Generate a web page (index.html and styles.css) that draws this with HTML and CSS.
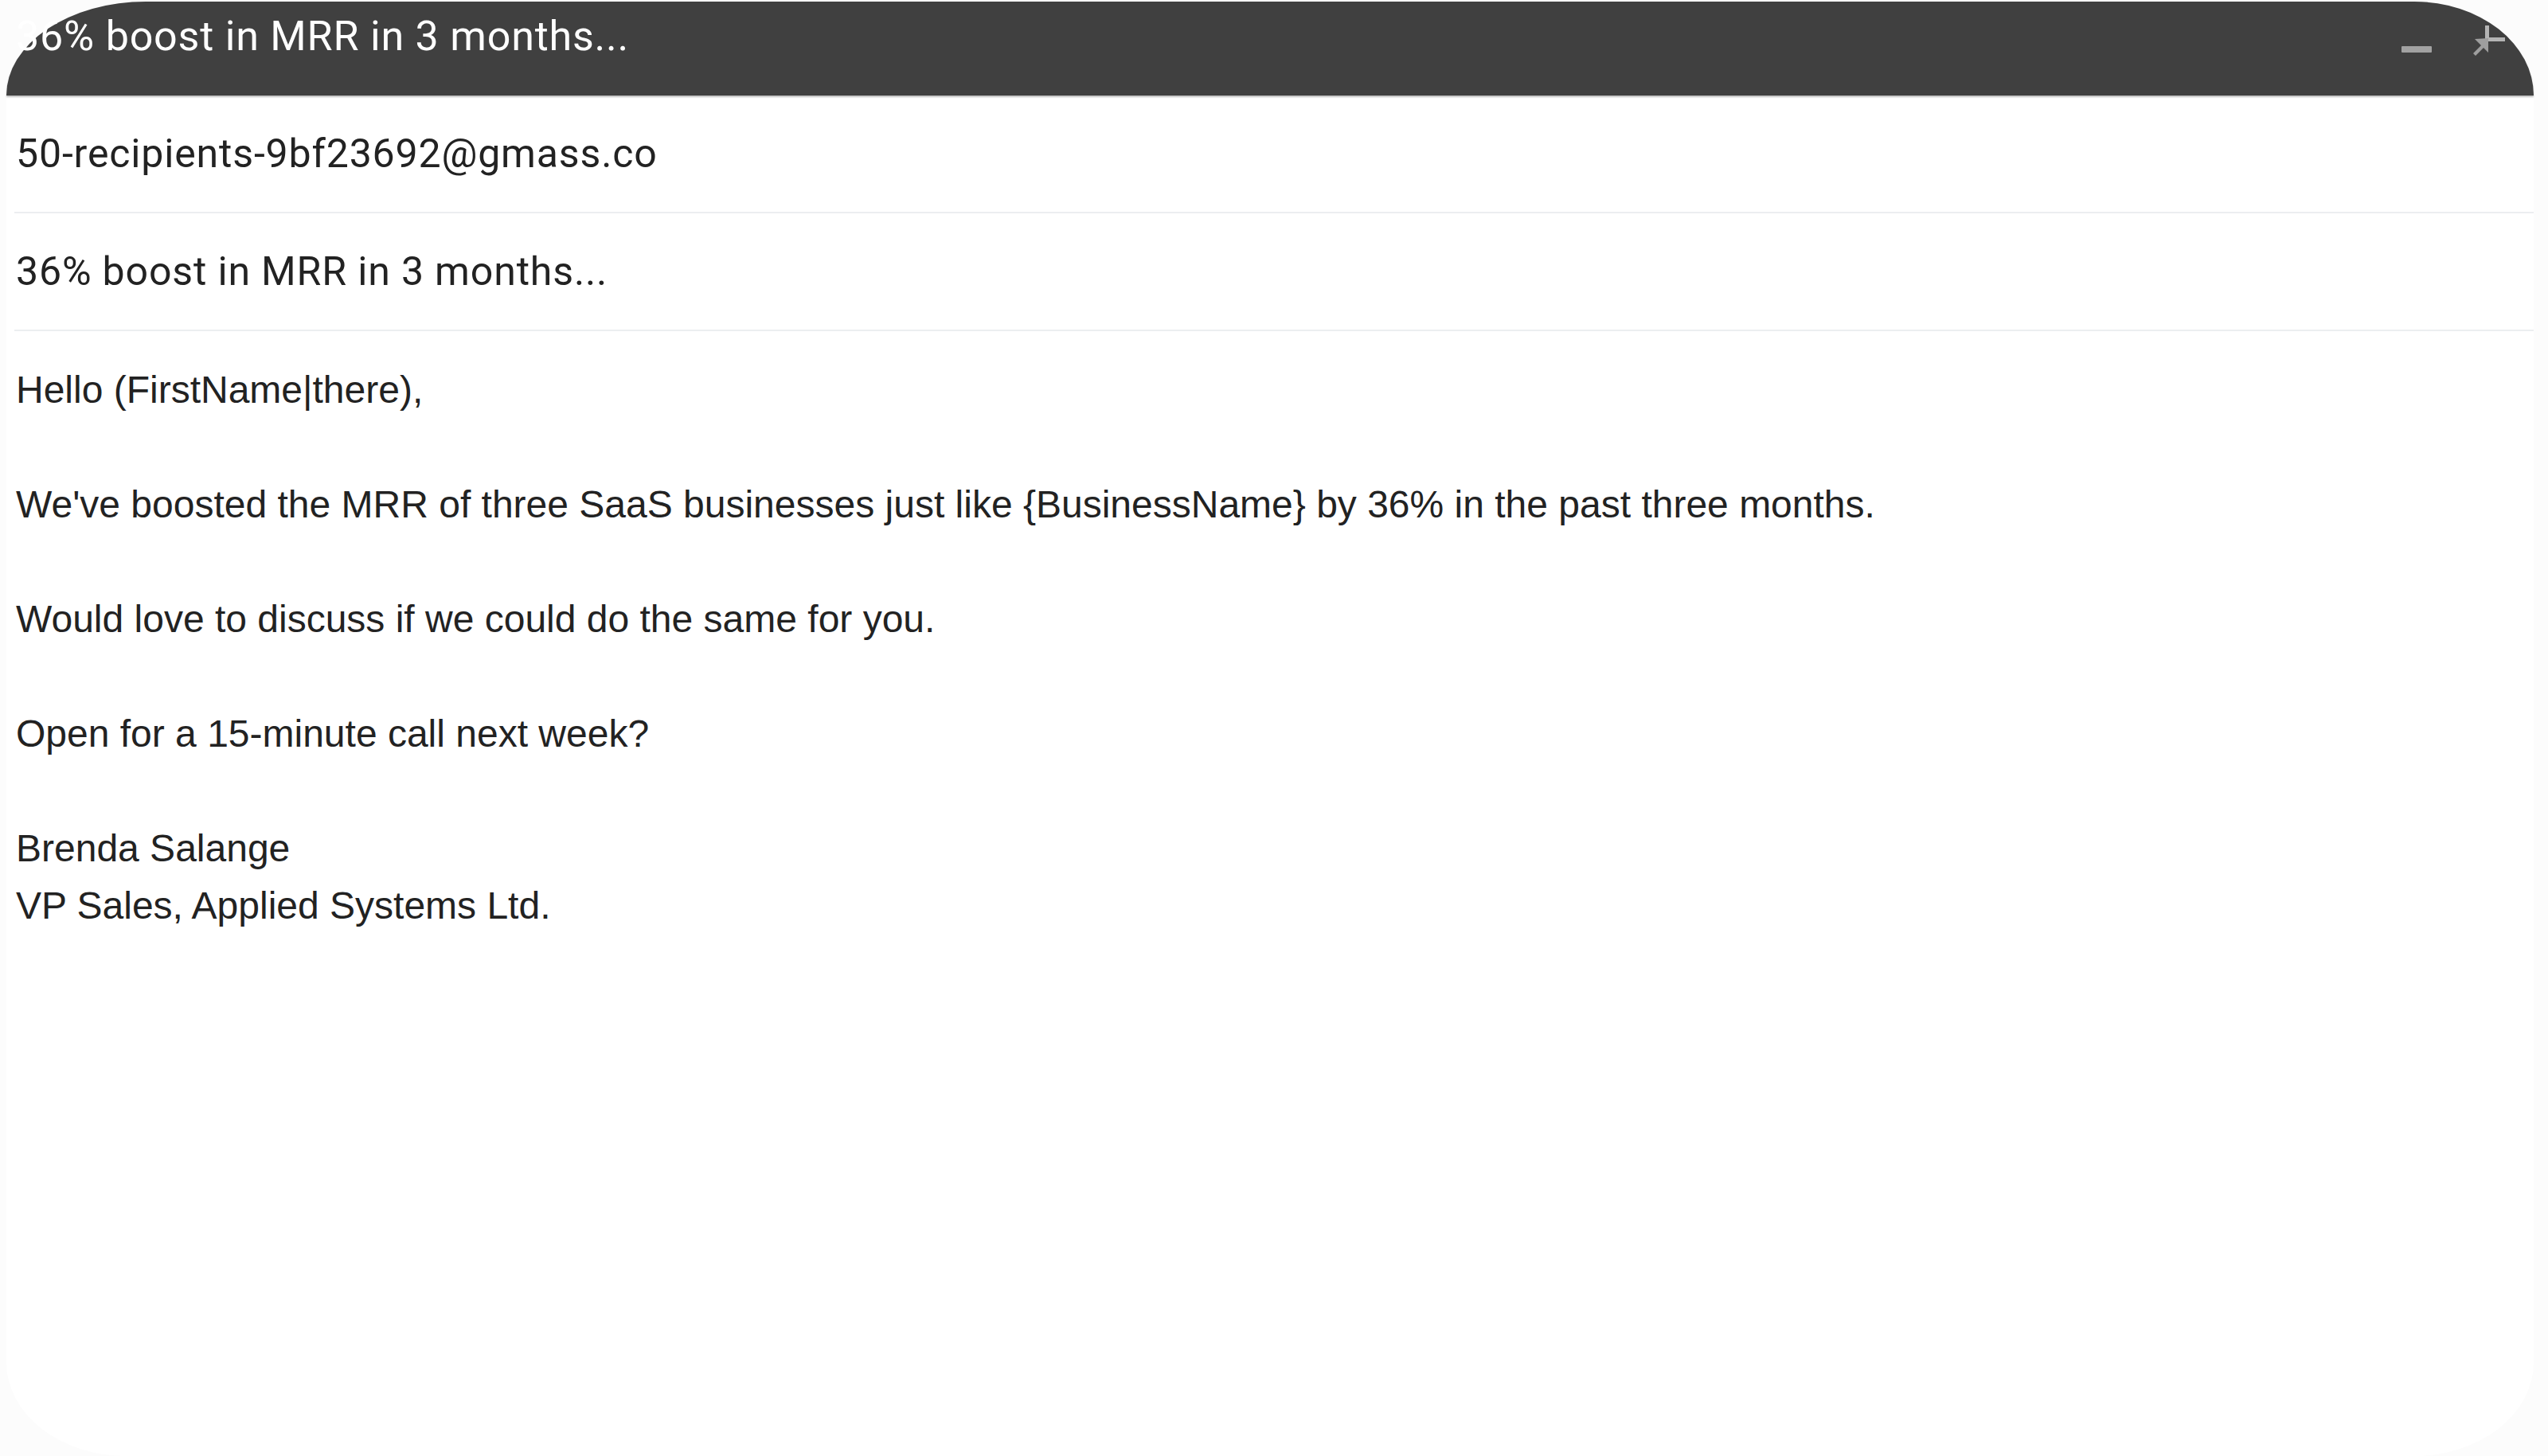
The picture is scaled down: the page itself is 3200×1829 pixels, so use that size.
FILE: index.html
```html
<!DOCTYPE html>
<html lang="en">

<head>
    <meta charset="UTF-8">
    <title>Compose - 36% boost in MRR in 3 months...</title>
    <meta name="viewport" content="width=device-width, initial-scale=1.0" />
    <link rel="stylesheet" href="styles.css">
</head>

<body>
    <div class="frame">
        <!-- compose window title bar -->
        <div class="compose-head">
            <span class="compose-title">36% boost in MRR in 3 months...</span>
            <div class="head-controls">
                <span class="btn-min"></span>
                <svg class="btn-full" width="42" height="42" viewBox="0 0 42 42">
                    <rect class="full-cross" x="17" y="2" width="5" height="18" />
                    <rect class="full-cross" x="19" y="17" width="23" height="5" />
                    <path class="full-arrow" d="M21 18 L21 36 L15 30 L5 40 L2 37 L12 27 L4 19 Z" />
                </svg>
            </div>
        </div>

        <div class="field">50-recipients-9bf23692@gmass.co</div>
        <div class="field">36% boost in MRR in 3 months...</div>

        <div class="message">
            <p>Hello (FirstName|there),</p>
            <p>We've boosted the MRR of three SaaS businesses just like {BusinessName} by 36% in the past three months.</p>
            <p>Would love to discuss if we could do the same for you.</p>
            <p>Open for a 15-minute call next week?</p>
            <p>Brenda Salange<br>VP Sales, Applied Systems Ltd.</p>
        </div>
    </div>
</body>

</html>
```

FILE: styles.css
```css
html,
body {
    height: 100%;
}

body {
    margin: 0;
    background: #fcfcfc;
    font-family: Roboto, "Liberation Sans", Arial, sans-serif;
    color: #222;
    overflow: hidden;
}

.frame {
    box-sizing: border-box;
    height: calc(100% - 2px);
    margin: 2px 18px 0 8px;
    background: #fff;
    border-radius: 175px 150px 150px 150px / 118px;
}

.compose-head {
    display: flex;
    justify-content: space-between;
    height: 118px;
    padding-left: 12px;
    padding-right: 36px;
    background: #404040;
    border-radius: 175px 150px 0 0 / 118px 118px 0 0;
    box-shadow: 0 2px 2px rgba(0, 0, 0, 0.25);
}

.compose-title {
    padding-top: 15px;
    font-size: 52px;
    line-height: 58px;
    letter-spacing: 0.8px;
    color: #fff;
    white-space: nowrap;
}

.head-controls {
    display: flex;
    align-items: flex-start;
    gap: 50px;
}

.btn-min {
    width: 38px;
    height: 8px;
    margin-top: 56px;
    background: #a2a2a2;
    border-radius: 1px;
}

.btn-full {
    margin-top: 28px;
}

.full-arrow {
    fill: #9e9e9e;
}

.full-cross {
    fill: #b4b4b4;
}

.field {
    display: flex;
    align-items: center;
    height: 146px;
    margin-left: 10px;
    padding-left: 2px;
    border-bottom: 2px solid #eceef0;
    font-size: 50px;
    letter-spacing: 0.85px;
    color: #222;
}

.message {
    padding: 38px 0 0 12px;
    font-family: "Liberation Sans", Arial, sans-serif;
    font-size: 48px;
    line-height: 72px;
    color: #222;
}

.message p {
    margin: 0 0 72px;
}
```
